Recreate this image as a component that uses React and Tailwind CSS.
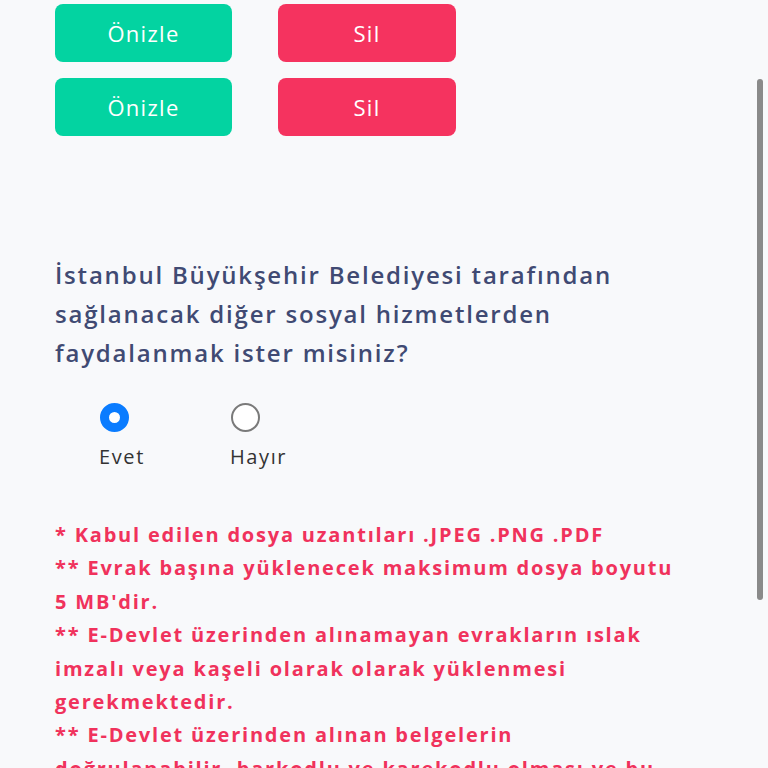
import React from "react";

const font = { fontFamily: '"Open Sans", "Liberation Sans", sans-serif' };

function ActionRow() {
  return (
    <div className="flex gap-[46px]">
      <button className="w-[177px] h-[58px] rounded-lg bg-[#03d3a1] text-white text-[22px] font-medium tracking-[1.3px]">
        Önizle
      </button>
      <button className="w-[178px] h-[58px] rounded-lg bg-[#f5335f] text-white text-[22px] font-medium tracking-[1.3px]">
        Sil
      </button>
    </div>
  );
}

function Radio({ label, checked }) {
  return (
    <label className="flex flex-col items-start w-[131px]">
      <span
        className={
          checked
            ? "ml-[1px] w-[29px] h-[29px] rounded-full border-[9px] border-[#0a7cff] bg-white"
            : "ml-[1px] w-[29px] h-[29px] rounded-full border-2 border-[#7a7a7a] bg-white"
        }
      />
      <span className="mt-[11px] text-[20px] leading-[28px] tracking-[1.6px] text-[#333333]">{label}</span>
    </label>
  );
}

export default function App() {
  const notes = [
    "* Kabul edilen dosya uzantıları .JPEG .PNG .PDF",
    "** Evrak başına yüklenecek maksimum dosya boyutu",
    "5 MB'dir.",
    "** E-Devlet üzerinden alınamayan evrakların ıslak",
    "imzalı veya kaşeli olarak olarak yüklenmesi",
    "gerekmektedir.",
    "** E-Devlet üzerinden alınan belgelerin",
    "doğrulanabilir, barkodlu ve karekodlu olması ve bu",
  ];

  return (
    <div className="relative h-[768px] overflow-hidden bg-[#f8f9fb]" style={font}>
      <div className="pl-[55px] pt-[4px]">
        <div className="flex flex-col gap-[16px]">
          <ActionRow />
          <ActionRow />
        </div>

        <div className="mt-[119px] text-[24px] leading-[39px] font-semibold tracking-[1.8px] text-[#404a73] whitespace-nowrap">
          <div>İstanbul Büyükşehir Belediyesi tarafından</div>
          <div>sağlanacak diğer sosyal hizmetlerden</div>
          <div>faydalanmak ister misiniz?</div>
        </div>

        <div className="mt-[31px] ml-[44px] flex">
          <Radio label="Evet" checked />
          <Radio label="Hayır" />
        </div>

        <div className="mt-[47px] text-[20px] leading-[33.4px] font-bold tracking-[1.8px] text-[#f0325c] whitespace-nowrap">
          {notes.map((n) => (
            <div key={n}>{n}</div>
          ))}
        </div>
      </div>

      {/* overlay scrollbar */}
      <div className="absolute right-[5px] top-[79px] w-[6px] h-[521px] rounded-full bg-[#8a8a8a]" />
    </div>
  );
}
